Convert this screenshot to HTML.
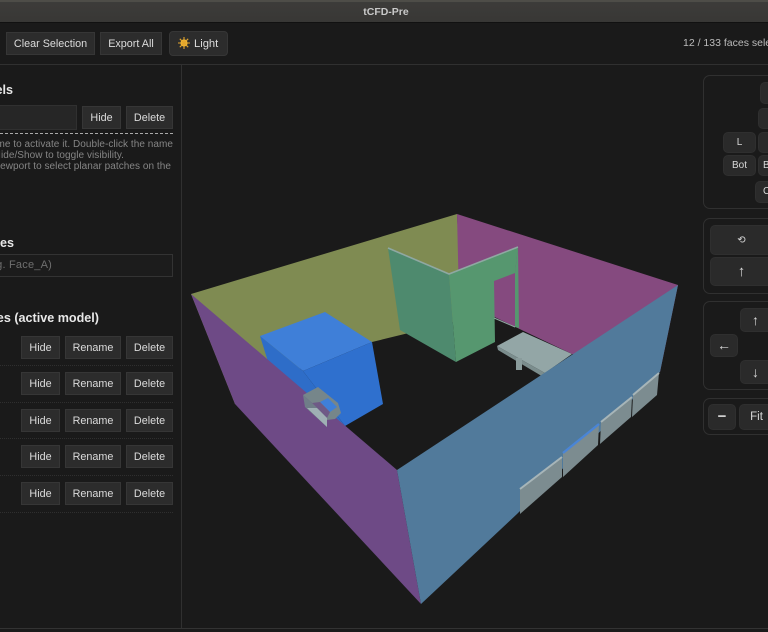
<!DOCTYPE html>
<html><head><meta charset="utf-8"><style>
html,body{margin:0;padding:0;background:#1a1a1a;overflow:hidden}
body{width:768px;height:632px;position:relative;overflow:hidden;font-family:"Liberation Sans",sans-serif;color:#ddd}
#w{position:absolute;left:0;top:0;width:768px;height:632px;overflow:hidden;filter:blur(.35px)}
.a{position:absolute;white-space:nowrap}
.b{position:absolute;box-sizing:border-box;height:23px;background:#2c2c2c;border:1px solid #363636;color:#dcdcdc;font-size:10.8px;line-height:23px;text-align:center;white-space:nowrap}
.k{position:absolute;box-sizing:border-box;background:#2a2a2a;border:1px solid #2f2f2f;border-radius:5px;color:#d8d8d8;font-size:10px;text-align:center;white-space:nowrap;overflow:hidden}
.p{position:absolute;box-sizing:border-box;left:703px;width:65px;border:1px solid #303030;border-right:0;border-radius:7px 0 0 7px;background:#1a1a1a}
.clip{position:absolute;top:0;height:632px;overflow:hidden}
.h{position:absolute;font-weight:bold;font-size:12.6px;color:#e8e8e8;white-space:nowrap;text-align:right;line-height:16px}
.t{position:absolute;font-size:10px;letter-spacing:.05px;color:#858585;white-space:nowrap;line-height:11px;text-align:right}
.d{position:absolute;left:0;width:173px;border-top:1px dotted #2f2f2f}
</style></head><body><div id="w">
<div class="a" style="left:0;top:0;width:768px;height:23px;background:linear-gradient(#3d3c3a,#383735)"></div>
<div class="a" style="left:0;top:0;width:768px;height:2px;background:#4e4d48"></div>
<div class="a" style="left:0;top:22px;width:768px;height:1px;background:#111"></div>
<div class="a" style="left:2px;width:768px;text-align:center;top:6px;font-size:10.5px;font-weight:bold;color:#c9c9c9;line-height:13px">tCFD-Pre</div>

<div class="b" style="left:6px;top:32px;width:89px">Clear Selection</div>
<div class="b" style="left:100px;top:32px;width:62px">Export All</div>
<div class="b" style="left:169px;top:31px;width:59px;height:25px;border-radius:4px"></div>
<svg class="a" style="left:177px;top:36px" width="14" height="14" viewBox="0 0 14 14"><circle cx="7" cy="7" r="3.6" fill="#f5bb35"/><path d="M7 1V13M1 7H13M2.8 2.8L11.2 11.2M11.2 2.8L2.8 11.2" stroke="#e2a52c" stroke-width="1.1"/></svg>
<div class="a" style="left:194px;top:37px;font-size:11.2px;line-height:14px;color:#dcdcdc">Light</div>
<div class="clip" style="left:683px;width:85px"><div class="a" style="left:0;top:37px;font-size:10.5px;line-height:13px;color:#bbb">12 / 133 faces selected</div></div>
<div class="a" style="left:0;top:64px;width:768px;height:1px;background:#303030"></div>
<div class="a" style="left:181px;top:65px;width:1px;height:563px;background:#303030"></div>

<!-- left panel -->
<div class="clip" style="left:0;width:181px">
<div class="h" style="left:-187px;width:200px;top:82px">Models</div>
<div class="a" style="left:-20px;top:105px;width:97px;height:25px;box-sizing:border-box;background:#262626;border:1px solid #303030"></div>
<div class="b" style="left:82px;top:106px;width:39px">Hide</div>
<div class="b" style="left:126px;top:106px;width:47px">Delete</div>
<div class="a" style="left:0;top:133px;width:173px;border-top:1px dashed #aaa"></div>
<div class="t" style="top:139px;left:-227px;width:400px">Click a model name to activate it. Double-click the name</div>
<div class="t" style="top:150px;left:-276px;width:400px">Use Hide/Show to toggle visibility.</div>
<div class="t" style="top:161px;left:-229px;width:400px">Click in the viewport to select planar patches on the</div>

<div class="h" style="left:-186px;width:200px;top:235px">Faces</div>
<div class="a" style="left:-20px;top:254px;width:193px;height:23px;box-sizing:border-box;border:1px solid #333;background:#1c1c1c;color:#6f6f6f;font-size:11px;line-height:21px;text-align:right;padding-right:120px;letter-spacing:.2px">e.g. Face_A)</div>
<div class="h" style="left:-201px;width:300px;top:310px">Faces (active model)</div>

<div class="b" style="left:21px;top:336px;width:39px">Hide</div><div class="b" style="left:65px;top:336px;width:56px">Rename</div><div class="b" style="left:126px;top:336px;width:47px">Delete</div>
<div class="d" style="top:365px"></div>
<div class="b" style="left:21px;top:372px;width:39px">Hide</div><div class="b" style="left:65px;top:372px;width:56px">Rename</div><div class="b" style="left:126px;top:372px;width:47px">Delete</div>
<div class="d" style="top:402px"></div>
<div class="b" style="left:21px;top:409px;width:39px">Hide</div><div class="b" style="left:65px;top:409px;width:56px">Rename</div><div class="b" style="left:126px;top:409px;width:47px">Delete</div>
<div class="d" style="top:438px"></div>
<div class="b" style="left:21px;top:445px;width:39px">Hide</div><div class="b" style="left:65px;top:445px;width:56px">Rename</div><div class="b" style="left:126px;top:445px;width:47px">Delete</div>
<div class="d" style="top:475px"></div>
<div class="b" style="left:21px;top:482px;width:39px">Hide</div><div class="b" style="left:65px;top:482px;width:56px">Rename</div><div class="b" style="left:126px;top:482px;width:47px">Delete</div>
<div class="d" style="top:512px"></div>
</div>
<div class="a" style="left:0;top:628px;width:768px;height:1px;background:#333"></div>

<!-- 3D scene -->
<svg class="a" style="left:0;top:0" width="768" height="632" viewBox="0 0 768 632">
<polygon points="191,294 457,214 462,320 372,342 290,372 235,404" fill="#7f8b52"/>
<polygon points="457,214 678,285 660,372 572,354 459,300" fill="#854a7f"/>
<polygon points="497,346 523,332 572,354 545,373" fill="#93a6a6"/>
<polygon points="497,346 545,373 545,378 498,350" fill="#7b8d8d"/>
<rect x="516" y="358" width="6" height="12" fill="#8a9c9c"/>
<polygon points="388,248 449,274 456,362 400,330" fill="#4e8a6e"/>
<polygon points="449,274 518,247 515,273 494,281 495,342 456,362" fill="#56976f"/>
<polygon points="515,273 518,247 519,328 515,327" fill="#56976f"/>
<polyline points="388,248 449,274 518,247" fill="none" stroke="#8fa8a2" stroke-width="1.6"/>
<polyline points="494,318 515,327" fill="none" stroke="#8fa8a2" stroke-width="1"/>
<polygon points="260,336 325,312 372,342 303,371" fill="#3f7fd8"/>
<polygon points="303,371 372,342 383,404 345,426" fill="#2f70ce"/>
<polygon points="260,336 303,371 345,426 280,400" fill="#2e6dc8"/>
<polygon points="191,294 397,470 421,604 235,404" fill="#6e4a86"/>
<polygon points="303,395 318,387 338,403 341,413 335,419 327,420 312,403" fill="#76868a"/>
<polygon points="320,402 328,398 337,407 330,412" fill="#3f7fd8"/>
<polygon points="312,403 320,402 330,412 327,418 317,408" fill="#6e5a86"/>
<polygon points="303,395 312,403 317,408 327,418 327,427 305,407" fill="#6f7d88"/>
<polygon points="307,408 317,408 327,418 327,427" fill="#9fb0b4"/>
<polygon points="397,470 678,285 660,372 517,514 421,604" fill="#517a9b"/>
<polygon points="520,489 562,457 562,477 520,514" fill="#7c8c90"/>
<polygon points="563,453 599,424 598,445 563,477" fill="#7c8c90"/>
<polygon points="601,422 632,397 631,417 600,444" fill="#7c8c90"/>
<polygon points="633,395 659,373 657,395 632,417" fill="#7c8c90"/>
<line x1="520" y1="489" x2="562" y2="457" stroke="#a7b5b8" stroke-width="2"/>
<line x1="563" y1="453" x2="599" y2="424" stroke="#4a85d6" stroke-width="2.4"/>
<line x1="601" y1="422" x2="632" y2="397" stroke="#a7b5b8" stroke-width="2"/>
<line x1="633" y1="395" x2="659" y2="373" stroke="#a7b5b8" stroke-width="2"/>
</svg>

<!-- right panels -->
<div class="p" style="top:75px;height:134px"></div>
<div class="k" style="left:760px;top:82px;width:8px;height:22px;border-right:0;border-radius:5px 0 0 5px"></div>
<div class="k" style="left:758px;top:108px;width:10px;height:21px;border-right:0;border-radius:5px 0 0 5px"></div>
<div class="k" style="left:723px;top:132px;width:33px;height:21px;line-height:19px">L</div>
<div class="k" style="left:758px;top:132px;width:10px;height:21px;border-right:0;border-radius:5px 0 0 5px"></div>
<div class="k" style="left:723px;top:155px;width:33px;height:21px;line-height:19px">Bot</div>
<div class="k" style="left:758px;top:155px;width:10px;height:21px;line-height:19px;text-align:left;padding-left:4px;border-right:0;border-radius:5px 0 0 5px">Back</div>
<div class="k" style="left:755px;top:181px;width:13px;height:22px;line-height:20px;text-align:left;padding-left:7px;border-right:0;border-radius:5px 0 0 5px">Center</div>

<div class="p" style="top:218px;height:76px"></div>
<div class="k" style="left:710px;top:225px;width:58px;height:30px;line-height:30px;font-size:10px;padding-left:4px;border-right:0;border-radius:5px 0 0 5px">⟲</div>
<div class="k" style="left:710px;top:257px;width:58px;height:29px;line-height:28px;font-size:15px;padding-left:4px;border-right:0;border-radius:5px 0 0 5px">↑</div>

<div class="p" style="top:301px;height:89px"></div>
<div class="k" style="left:740px;top:308px;width:28px;height:24px;line-height:22px;font-size:14px;padding-left:2px;border-right:0;border-radius:5px 0 0 5px">↑</div>
<div class="k" style="left:710px;top:334px;width:28px;height:23px;line-height:21px;font-size:14px">←</div>
<div class="k" style="left:740px;top:360px;width:28px;height:24px;line-height:22px;font-size:14px;padding-left:2px;border-right:0;border-radius:5px 0 0 5px">↓</div>

<div class="p" style="top:398px;height:37px"></div>
<div class="k" style="left:708px;top:404px;width:28px;height:26px;line-height:24px;font-size:15px;font-weight:bold">−</div>
<div class="k" style="left:739px;top:404px;width:29px;height:26px;line-height:24px;font-size:11.5px;padding-left:5px;border-right:0;border-radius:5px 0 0 5px">Fit</div>
</div></body></html>
